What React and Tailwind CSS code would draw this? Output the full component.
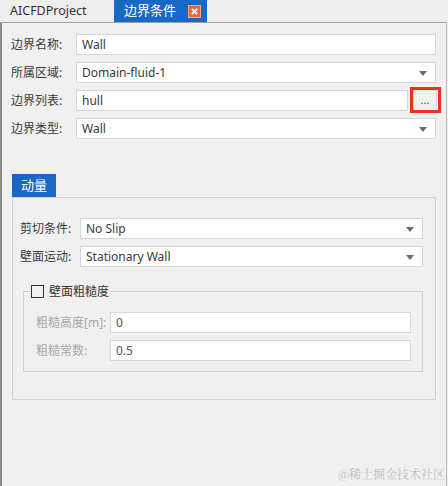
import React from "react";

const font = { fontFamily: '"Noto Sans", "Noto Sans CJK SC", sans-serif' };

function Arrow() {
  return (
    <svg width="8" height="5" viewBox="0 0 8 5" className="absolute right-[8px] top-[8px]">
      <path d="M0 0 L8 0 L4 5 Z" fill="#6b6b6b" />
    </svg>
  );
}

function Field({ value, w, select, muted }) {
  return (
    <div
      className={`relative h-[21px] bg-white border border-[#d6d6d6] flex items-center pl-[5px] text-[12px] ${muted ? "text-[#555]" : "text-[#3a3a3a]"}`}
      style={{ width: w }}
    >
      {value}
      {select && <Arrow />}
    </div>
  );
}

function Row({ label, labelW, children, muted }) {
  return (
    <div className="flex items-center h-[21px]">
      <div
        className={`shrink-0 text-[12px] ${muted ? "text-[#a8a8a8]" : "text-[#3a3a3a]"}`}
        style={{ width: labelW }}
      >
        {label}
      </div>
      {children}
    </div>
  );
}

export default function App() {
  return (
    <div className="w-[448px] h-[486px] bg-[#f0f0f0] relative overflow-hidden" style={font}>
      {/* tab bar */}
      <div className="h-[22px] flex bg-[#eeeeee]">
        <div className="w-[114px] flex items-center pl-[10px] text-[12.5px] text-[#333]">AICFDProject</div>
        <div className="w-[93px] bg-[#1a68c6] flex items-center pl-[10px] text-[13px] text-white">
          边界条件
          <svg width="13" height="13" viewBox="0 0 13 13" className="ml-[12px]">
            <rect x="0.5" y="0.5" width="12" height="12" fill="#e5693b" stroke="#f3a884" />
            <path d="M3.8 3.8 L9.2 9.2 M9.2 3.8 L3.8 9.2" stroke="#fff" strokeWidth="1.8" />
          </svg>
        </div>
      </div>

      {/* panel */}
      <div className="h-[464px] border-l-2 border-l-[#8c8c8c] border-t border-t-[#a0a0a0] border-r border-r-[#bdbdbd] w-[447px] pl-[9px] pt-[11px]">
        <div className="flex flex-col gap-[7px]">
          <Row label="边界名称:" labelW={65}>
            <Field value="Wall" w={360} />
          </Row>
          <Row label="所属区域:" labelW={65}>
            <Field value="Domain-fluid-1" w={360} select />
          </Row>
          <Row label="边界列表:" labelW={65}>
            <Field value="hull" w={332} />
            <div className="relative ml-[5px]">
              <div className="w-[24px] h-[21px] bg-[#f0f0f0] border border-[#d8d8d8] flex items-center justify-center text-[11px] text-[#555] leading-none pb-[2px]">
                ...
              </div>
              <div className="absolute left-[-3px] top-[-3px] w-[31px] h-[26px] border-[3px] border-[#e8341c]" />
            </div>
          </Row>
          <Row label="边界类型:" labelW={65}>
            <Field value="Wall" w={360} select />
          </Row>
        </div>

        {/* momentum */}
        <div className="mt-[35px] ml-[1px]">
          <div className="w-[44px] h-[23px] bg-[#1a68c6] text-white text-[13px] flex items-center justify-center">动量</div>
          <div className="w-[424px] h-[203px] border border-[#d2d2d2] pt-[20px] pl-[7px]">
            <div className="flex flex-col gap-[7px]">
              <Row label="剪切条件:" labelW={60}>
                <Field value="No Slip" w={343} select />
              </Row>
              <Row label="壁面运动:" labelW={60}>
                <Field value="Stationary Wall" w={343} select />
              </Row>
            </div>

            <div className="relative mt-[24px] ml-[3px] w-[400px] h-[81px] border border-[#d0d0d0] pt-[20px] pl-[12px]">
              <div className="absolute left-[6px] top-[-8px] bg-[#f0f0f0] flex items-center px-[1px] h-[15px]">
                <div className="w-[13px] h-[13px] border border-[#333] bg-[#f0f0f0]" />
                <span className="ml-[5px] text-[12px] text-[#333]">壁面粗糙度</span>
              </div>
              <div className="flex flex-col gap-[7px]">
                <Row label="粗糙高度[m]:" labelW={74} muted>
                  <Field value="0" w={301} muted />
                </Row>
                <Row label="粗糙常数:" labelW={74} muted>
                  <Field value="0.5" w={301} muted />
                </Row>
              </div>
            </div>
          </div>
        </div>
      </div>

      <div className="absolute right-[3px] bottom-[3px] text-[12px] text-[#bdbdbd]" style={{ fontFamily: '"Noto Serif CJK SC", "Noto Sans CJK SC", serif' }}>
        @稀土掘金技术社区
      </div>
    </div>
  );
}
